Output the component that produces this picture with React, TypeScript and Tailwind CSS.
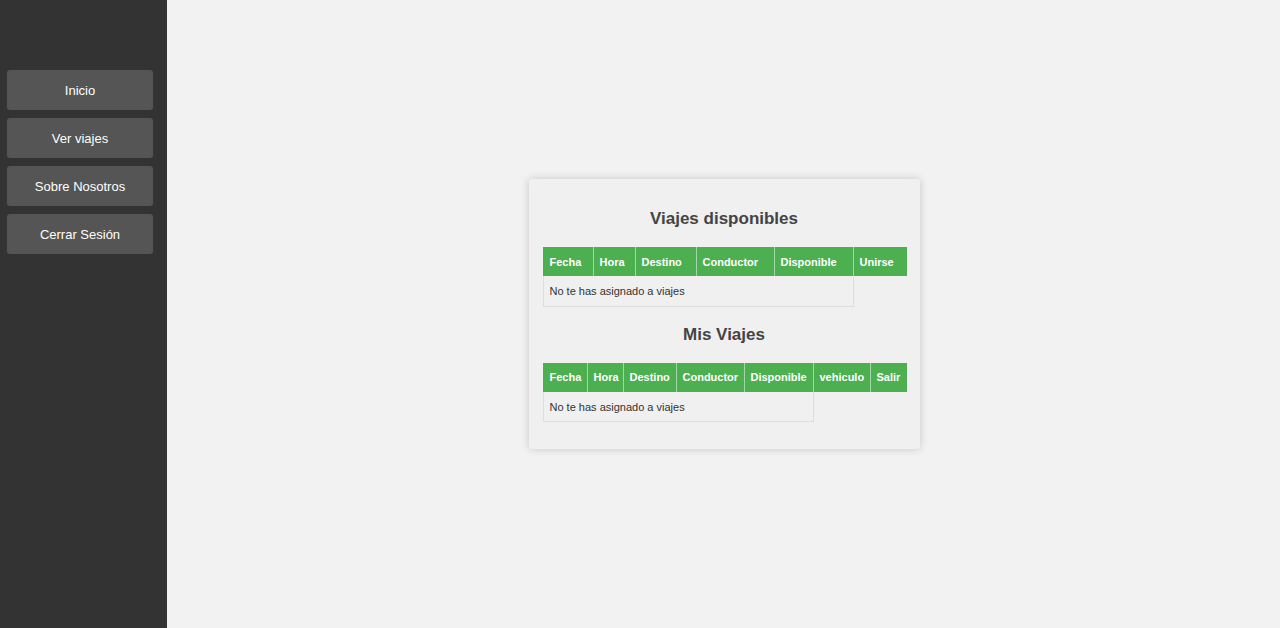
const menu = ['Inicio', 'Ver viajes', 'Sobre Nosotros', 'Cerrar Sesión'];

const tablaUno = [
  { label: 'Fecha', w: 'w-[50px]' },
  { label: 'Hora', w: 'w-[42px]' },
  { label: 'Destino', w: 'w-[61px]' },
  { label: 'Conductor', w: 'w-[78px]' },
  { label: 'Disponible', w: 'w-[79px]' },
  { label: 'Unirse', w: 'w-[53px]' },
];

const tablaDos = [
  { label: 'Fecha', w: 'w-[44px]' },
  { label: 'Hora', w: 'w-[36px]' },
  { label: 'Destino', w: 'w-[53px]' },
  { label: 'Conductor', w: 'w-[68px]' },
  { label: 'Disponible', w: 'w-[69px]' },
  { label: 'vehiculo', w: 'w-[57px]' },
  { label: 'Salir', w: 'w-[36px]' },
];

function Tabla({ cols }: { cols: { label: string; w: string }[] }) {
  return (
    <table className="w-[363px] border-collapse table-fixed text-[11px]">
      <thead>
        <tr>
          {cols.map((c) => (
            <th
              key={c.label}
              className={`${c.w} h-[29px] bg-[#4caf50] text-white font-bold text-left px-[6px] pt-[1px] border-x border-[#a5d6a7] first:border-l-[#4caf50] last:border-r-[#4caf50]`}
            >
              {c.label}
            </th>
          ))}
        </tr>
      </thead>
      <tbody>
        <tr>
          <td colSpan={5} className="h-[30px] px-[6px] pt-[1px] text-[#333] border border-[#dedede] border-t-0">
            No te has asignado a viajes
          </td>
        </tr>
      </tbody>
    </table>
  );
}

export default function App() {
  return (
    <div className="flex h-[628px] w-[1280px] bg-[#f2f2f2] font-['Liberation_Sans',Arial,sans-serif]">
      <aside className="w-[167px] shrink-0 bg-[#333] pt-[70px] px-[7px] flex flex-col gap-[8px]">
        {menu.map((m) => (
          <button
            key={m}
            className="w-[146px] h-[40px] pt-[1px] rounded-[3px] bg-[#555] text-white text-[13px]"
          >
            {m}
          </button>
        ))}
      </aside>
      <main className="flex-1 flex items-center justify-center pl-[1px]">
        <div className="w-[391px] bg-[#f0f0f0] rounded-[3px] shadow-[0_0_8px_rgba(0,0,0,0.18)] px-[14px] pt-[30px] pb-[27px]">
          <h2 className="text-center text-[17px] leading-[20px] font-bold text-[#444] mb-[18px]">
            Viajes disponibles
          </h2>
          <Tabla cols={tablaUno} />
          <h2 className="text-center text-[17px] leading-[20px] font-bold text-[#444] mt-[18px] mb-[18px]">
            Mis Viajes
          </h2>
          <Tabla cols={tablaDos} />
        </div>
      </main>
    </div>
  );
}
